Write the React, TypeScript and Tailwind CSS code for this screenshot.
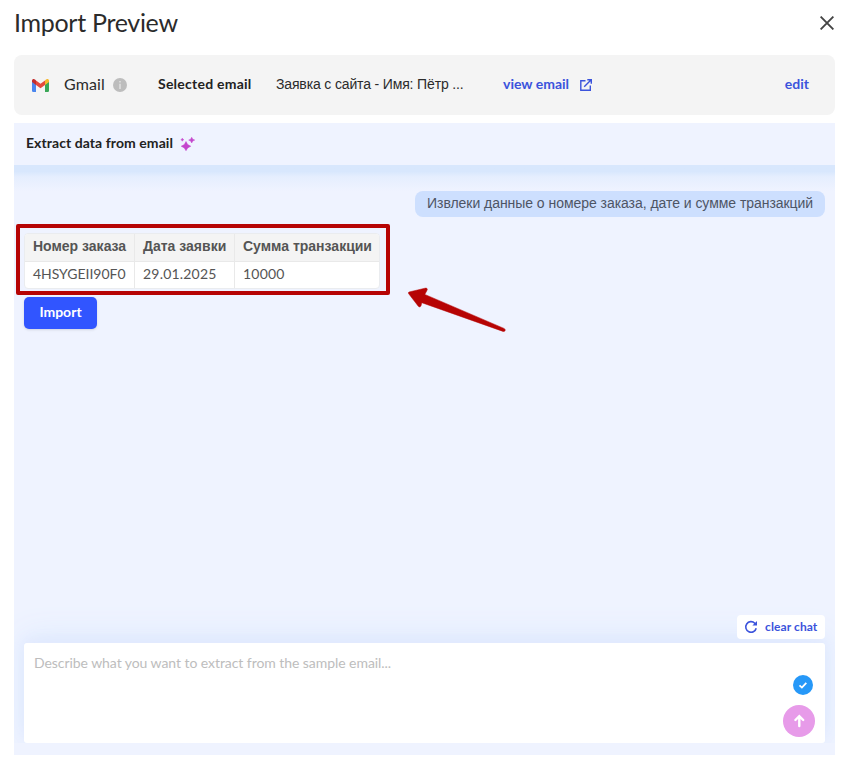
import React from "react";

const rows = [["4HSYGEII90F0", "29.01.2025", "10000"]];

function GmailIcon() {
  return (
    <svg width="17" height="13" viewBox="0 0 17 13" className="ml-px shrink-0">
      <path d="M0 2.4 4 5.3V13H1.2A1.2 1.2 0 0 1 0 11.8Z" fill="#4a86ee" />
      <path d="M13 5.3 17 2.4v9.4a1.2 1.2 0 0 1-1.2 1.2H13Z" fill="#3aa757" />
      <path d="M4 1.4 8.5 4.8 13 1.4v4.5L8.5 9.3 4 5.9Z" fill="#e54a3c" />
      <path d="M0 1.8C0 0 2 -.6 3.3.8L4 1.4v4.5L0 3Z" fill="#c22d2d" />
      <path d="M17 1.8C17 0 15-.6 13.7.8L13 1.4v4.5L17 3Z" fill="#f6b72b" />
    </svg>
  );
}

function SourceBar() {
  return (
    <section className="mx-[14px] flex h-[60px] w-[821px] shrink-0 items-center rounded-lg bg-[#f4f4f4] pl-[17px] pr-[26px]">
      <GmailIcon />
      <span className="ml-[15px] w-[49px] whitespace-nowrap pb-[2px] font-[Lato] text-[16px] tracking-[0.1px] text-[#2b2b2b]">Gmail</span>
      <svg width="14" height="14" viewBox="0 0 14 14" className="shrink-0">
        <circle cx="7" cy="7" r="7" fill="#bdbdbd" />
        <path d="M6.2 3h1.6v1.5H6.2zM6.2 5.7h1.6V11H6.2z" fill="#dfdfdf" />
      </svg>
      <b className="ml-[31px] w-[118px] whitespace-nowrap pb-[3px] font-[Lato] text-[14px] tracking-[0.24px] text-[#222]">Selected email</b>
      <span className="w-[227px] whitespace-nowrap pb-[2px] font-['Liberation_Sans'] text-[14px] tracking-[-0.15px] text-[#2b2b2b]">Заявка с сайта - Имя: Пётр ...</span>
      <b className="w-[77px] whitespace-nowrap pb-[3px] font-[Lato] text-[14px] text-[#3b53dc]">view email</b>
      <svg width="12" height="12" viewBox="0 0 12 12" fill="none" stroke="#3b53dc" strokeWidth="1.4">
        <path d="M5.5 1.7H.8v9.5h9.5V6.5M7.3.8h4v4M11.2.8 4.2 7.8" />
      </svg>
      <b className="ml-auto whitespace-nowrap pb-[3px] font-[Lato] text-[14px] text-[#3b53dc]">edit</b>
    </section>
  );
}

function ResultTable() {
  return (
    <div className="relative ml-[10px] h-[56px] w-[356px] shrink-0">
      <table className="h-[56px] w-[356px] table-fixed border-separate border-spacing-0 overflow-hidden rounded border border-[#eaecef] bg-white text-[14px] text-[#555]">
        <colgroup>
          <col className="w-[110px]" />
          <col className="w-[100px]" />
          <col className="w-[144px]" />
        </colgroup>
        <thead>
          <tr className="h-7 bg-[#f4f4f4]">
            <th className="whitespace-nowrap border-b border-r border-[#e9e9e9] p-0 pl-2 pb-1 text-left font-['Liberation_Sans'] leading-5">Номер заказа</th>
            <th className="whitespace-nowrap border-b border-r border-[#e9e9e9] p-0 pl-2 pb-1 text-left font-['Liberation_Sans'] leading-5">Дата заявки</th>
            <th className="whitespace-nowrap border-b border-[#e9e9e9] p-0 pl-2 pb-1 text-left font-['Liberation_Sans'] leading-5">Сумма транзакции</th>
          </tr>
        </thead>
        <tbody>
          {rows.map((row) => (
            <tr key={row[0]} className="h-[26px]">
              <td className="whitespace-nowrap border-r border-[#e9e9e9] p-0 pb-[2px] pl-2 font-[Lato] leading-5 tracking-[-0.03px]">{row[0]}</td>
              <td className="whitespace-nowrap border-r border-[#e9e9e9] p-0 pb-[2px] pl-2 font-[Lato] leading-5 tracking-[0.2px]">{row[1]}</td>
              <td className="whitespace-nowrap p-0 pb-[2px] pl-2 font-[Lato] leading-5 tracking-[0.2px]">{row[2]}</td>
            </tr>
          ))}
        </tbody>
      </table>
      <div className="absolute -left-2 -top-[9px] h-[71px] w-[374px] rounded-[2px] border-4 border-[#b60404]" />
      <svg className="absolute left-[384px] top-[54px]" width="100" height="46" viewBox="0 0 100 46">
        <path
          d="M1 5 17 1.2c2-.5 3 1 1.8 2.6L16.8 7.4 96 41.4c2.2 1.2 1.2 3.4-1 3L13.8 15.7 13 18.8c-.5 1.5-2 1.4-2.9.2L.5 6.5Q0 5.4 1 5Z"
          fill="#b60404"
          stroke="#b60404"
          strokeWidth=".5"
        />
      </svg>
    </div>
  );
}

function Composer() {
  return (
    <div className="mt-auto flex h-[162px] flex-col overflow-hidden">
      <div className="flex h-[50px] shrink-0 items-start justify-end pr-[10px] pt-[22px]">
        <button className="relative z-10 flex h-6 w-[88px] items-center rounded bg-white pl-[7px]">
          <svg width="14" height="14" viewBox="0 0 14 14" fill="none" stroke="#3b53dc" strokeWidth="1.6">
            <path d="M12.2 8.2A5.3 5.3 0 1 1 10.8 3.2L12 4.6" />
            <path d="M13 1v4.6H8.4Z" fill="#3b53dc" stroke="none" />
          </svg>
          <b className="ml-[7px] whitespace-nowrap font-[Lato] text-[12px] tracking-[0.1px] text-[#3b53dc]">clear chat</b>
        </button>
      </div>
      <div className="mx-[10px] flex h-[100px] shrink-0 justify-between rounded-[3px] bg-white pl-[10px] pr-[10px] shadow-[0_-4px_12px_#e2e9fe,0_-6px_32px_#dbeafd]">
        <span className="mt-[10px] whitespace-nowrap font-[Lato] text-[14px] leading-5 tracking-[-0.06px] text-[#bdbdbd]">Describe what you want to extract from the sample email...</span>
        <div className="flex flex-col items-end gap-[10px] pt-8">
          <svg width="20" height="20" viewBox="0 0 20 20" className="mr-[2px]">
            <circle cx="10" cy="10" r="10" fill="#2698f8" />
            <path d="m6.5 10.4 2.4 2.2 4.4-4.8" fill="none" stroke="#fff" strokeWidth="1.8" />
          </svg>
          <svg width="32" height="32" viewBox="0 0 32 32">
            <circle cx="16" cy="16" r="16" fill="#e79be9" />
            <path d="M16.3 21V11.5M12.4 15l3.9-3.9 3.9 3.9" fill="none" stroke="#fff" strokeWidth="2.4" strokeLinecap="round" />
          </svg>
        </div>
      </div>
      <div className="relative z-10 h-3 shrink-0 bg-[#eff3ff]" />
    </div>
  );
}

export default function App() {
  return (
    <main className="flex h-[764px] w-[848px] flex-col overflow-hidden bg-white font-['Liberation_Sans']">
      <header className="flex h-[55px] shrink-0 items-start justify-between pl-[14px] pr-[14px]">
        <h1 className="mt-[7px] whitespace-nowrap font-[Lato] text-[25px] leading-[30px] tracking-[-0.3px] text-[#2b2b2b]">Import Preview</h1>
        <svg width="14" height="14" viewBox="0 0 14 14" className="mt-4" stroke="#444" strokeWidth="1.9">
          <path d="m.6.6 12.8 12.8M13.4.6.6 13.4" />
        </svg>
      </header>
      <SourceBar />
      <section className="mx-[14px] mt-2 flex h-[632px] w-[821px] shrink-0 flex-col bg-[#eff3ff]">
        <div className="flex h-[42px] shrink-0 items-center pl-3">
          <b className="w-[154px] whitespace-nowrap pb-[3px] font-[Lato] text-[14px] tracking-[0.07px] text-[#222]">Extract data from email</b>
          <svg width="15" height="14" viewBox="0 0 15 14" fill="#c446cd" stroke="#c446cd" strokeWidth=".5">
            <path d="M6 4.5 7.7 7.6 10.8 9.2 7.7 10.9 6 13.7 4.3 10.9 1.2 9.2 4.3 7.6ZM11.7.3l1 1.9 2 .9-2 .9-1 2-1-2-2-.9 2-.9ZM2.3 1.2l.5 1 1 .5-1 .5-.5 1-.5-1-1-.5 1-.5Z" />
          </svg>
        </div>
        <div className="flex min-h-0 flex-1 flex-col">
          <div className="h-[26px] shrink-0 bg-linear-to-b from-[#d8e7fd] from-25% via-[#e5eefe] via-45% to-[#eff3ff]" />
          <p className="mr-[10px] flex h-[26px] w-[410px] shrink-0 items-center self-end whitespace-nowrap rounded-lg bg-[#cddffe] pl-3 pb-px text-[14px] tracking-[-0.045px] text-[#4d5565]">Извлеки данные о номере заказа, дате и сумме транзакций</p>
          <div className="h-4 shrink-0" />
          <ResultTable />
          <button className="ml-[10px] mt-2 flex h-8 w-[73px] shrink-0 items-center justify-center rounded-[5px] bg-[#3155ff] pb-[3px] font-[Lato] text-[14px] font-bold text-white shadow-sm">Import</button>
          <Composer />
        </div>
      </section>
    </main>
  );
}
